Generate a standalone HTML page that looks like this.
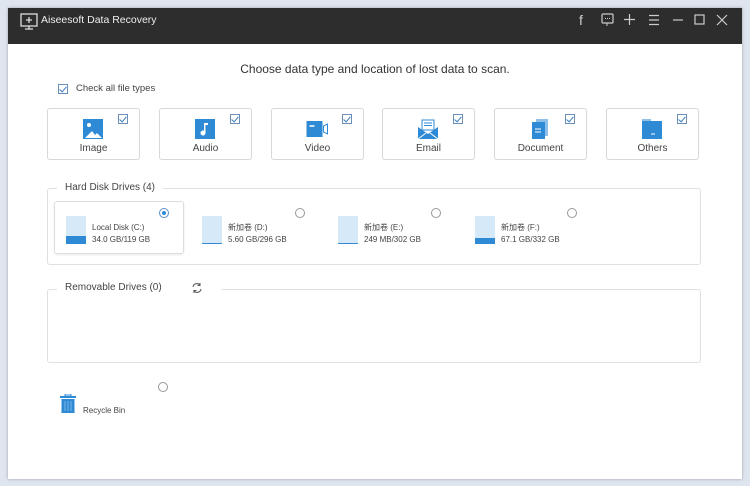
<!DOCTYPE html><html><head><style>
*{margin:0;padding:0;box-sizing:border-box}
body{width:750px;height:486px;background:#dfe5ee;font-family:"Liberation Sans","Noto Sans CJK SC",sans-serif;position:relative;overflow:hidden;color:#444}
.win{position:absolute;left:8px;top:8px;width:734px;height:471px;background:#fff;box-shadow:0 0 3px rgba(0,0,0,.3)}
.tb{position:absolute;left:0;top:0;width:734px;height:36px;background:#2d2d2d;color:#eee;font-size:10.5px}
.a{position:absolute}
.card{position:absolute;top:100px;width:93px;height:52px;border:1px solid #d8d8d8;border-radius:3px;font-size:10px;color:#444;text-align:center}
.card .l{position:absolute;left:0;right:0;top:34px}
.card .ic{position:absolute;left:35px;top:10px;width:20px;height:20px}
.cb{position:absolute;width:10px;height:10px;border:1px solid #6a8fb8;background:#fff}
.cb:after{content:"";position:absolute;left:2px;top:0px;width:3px;height:6px;border:solid #3a7cc0;border-width:0 1.3px 1.3px 0;transform:rotate(40deg)}
.grp{position:absolute;border:1px solid #e0e0e0;border-radius:3px}
.lg{position:absolute;background:#fff;padding:0 8px;font-size:10px;color:#444}
.rad{position:absolute;width:10px;height:10px;border:1px solid #999;border-radius:50%;background:#fff}
.drv{position:absolute;font-size:8px;color:#444;line-height:12px}
.disk{position:absolute;width:20px;height:28px;background:#d6e9f8}
</style></head><body>
<div class="win">
<div class="tb">
<svg class="a" style="left:12px;top:5px" width="18" height="17" viewBox="0 0 18 17"><rect x="1" y="1" width="16" height="12" fill="none" stroke="#ddd" stroke-width="1.3"/><path d="M9 4v6M6 7h6M5 16h8M9 13v3" stroke="#ddd" stroke-width="1.3"/></svg>
<div class="a" style="left:33px;top:6px">Aiseesoft Data Recovery</div>
<div class="a" style="left:571px;top:4px;font-size:14px;color:#ccc">f</div>
<svg class="a" style="left:593px;top:5px" width="13" height="14"><rect x="1" y="1" width="11" height="9" rx="1" fill="none" stroke="#ccc" stroke-width="1.2"/><path d="M4 5.5h1M6 5.5h1M8 5.5h1M6 10v3" stroke="#ccc"/></svg>
<svg class="a" style="left:615px;top:5px" width="13" height="13"><path d="M6.5 1v11M1 6.5h11" stroke="#ccc" stroke-width="1.2"/></svg>
<svg class="a" style="left:640px;top:6px" width="12" height="12"><path d="M1 1.5h10M1 6h10M1 10.5h10" stroke="#ccc" stroke-width="1.2"/></svg>
<svg class="a" style="left:664px;top:6px" width="12" height="12"><path d="M1 6h10" stroke="#ccc" stroke-width="1.2"/></svg>
<svg class="a" style="left:686px;top:6px" width="12" height="12"><rect x="1" y="1" width="9" height="9" fill="none" stroke="#ccc" stroke-width="1.2"/></svg>
<svg class="a" style="left:708px;top:6px" width="12" height="12"><path d="M1 1l10 10M11 1L1 11" stroke="#ccc" stroke-width="1.2"/></svg>
</div>
<div class="a" style="left:0;width:734px;top:54px;text-align:center;font-size:12px;color:#333">Choose data type and location of lost data to scan.</div>
<div class="cb" style="left:50px;top:76px"></div>
<div class="a" style="left:68px;top:75px;font-size:9.5px">Check all file types</div>

<div class="card" style="left:39px"><svg class="ic" viewBox="0 0 20 20"><rect width="20" height="20" fill="#2f8ad6"/><path d="M2 19l7-7 3 4 2-2 5 5z" fill="#fff"/><circle cx="6" cy="6" r="2" fill="#fff"/></svg><div class="cb" style="left:70px;top:5px"></div><div class="l">Image</div></div>
<div class="card" style="left:151px"><svg class="ic" viewBox="0 0 20 20"><rect width="20" height="20" fill="#2f8ad6"/><path d="M9 4h4v2h-2.5v8a2.5 2.5 0 1 1-1.5-2.3z" fill="#fff"/></svg><div class="cb" style="left:70px;top:5px"></div><div class="l">Audio</div></div>
<div class="card" style="left:263px"><svg class="ic" viewBox="0 0 20 20" style="width:23px;left:33px"><rect x="0" y="2" width="16" height="16" fill="#2f8ad6"/><path d="M3 7h5" stroke="#fff" stroke-width="1.5"/><path d="M17 7l4-2v10l-4-2z" fill="none" stroke="#2f8ad6"/></svg><div class="cb" style="left:70px;top:5px"></div><div class="l">Video</div></div>
<div class="card" style="left:374px"><svg class="ic" viewBox="0 0 20 20"><rect x="4" y="1" width="12" height="10" fill="#fff" stroke="#2f8ad6"/><path d="M6 4h8M6 6.5h8" stroke="#2f8ad6"/><path d="M0 8l10 7 10-7v12H0z" fill="#2f8ad6"/><path d="M0 20l8-6M20 20l-8-6" stroke="#fff"/></svg><div class="cb" style="left:70px;top:5px"></div><div class="l">Email</div></div>
<div class="card" style="left:486px"><svg class="ic" viewBox="0 0 20 20"><rect x="6" y="0" width="12" height="17" fill="#8cc0ea"/><rect x="2" y="3" width="13" height="17" fill="#2f8ad6"/><path d="M5 10h6M5 13h6" stroke="#fff"/></svg><div class="cb" style="left:70px;top:5px"></div><div class="l">Document</div></div>
<div class="card" style="left:598px"><svg class="ic" viewBox="0 0 20 20"><rect x="0" y="0" width="9" height="4" fill="#8cc0ea"/><rect x="0" y="2" width="20" height="18" fill="#2f8ad6"/><path d="M9 15h4" stroke="#fff"/></svg><div class="cb" style="left:70px;top:5px"></div><div class="l">Others</div></div>

<div class="grp" style="left:39px;top:180px;width:654px;height:77px"></div>
<div class="lg" style="left:49px;top:174px">Hard Disk Drives (4)</div>
<div class="a" style="left:46px;top:193px;width:130px;height:53px;border:1px solid #ddd;border-radius:3px;box-shadow:0 1px 2px rgba(0,0,0,.08)"></div>
<div class="rad" style="left:151px;top:200px;border-color:#5a8fc8"><div style="position:absolute;left:2px;top:2px;width:4px;height:4px;border-radius:50%;background:#2f8ad6"></div></div>
<div class="disk" style="left:58px;top:208px"></div><div class="a" style="left:58px;top:228px;width:20px;height:8px;background:#2f8ad6"></div>
<div class="drv" style="left:84px;top:214px">Local Disk (C:)<br>34.0 GB/119 GB</div>
<div class="rad" style="left:287px;top:200px"></div>
<div class="disk" style="left:194px;top:208px"></div><div class="a" style="left:194px;top:235px;width:20px;height:1px;background:#2f8ad6"></div>
<div class="drv" style="left:220px;top:214px">新加卷 (D:)<br>5.60 GB/296 GB</div>
<div class="rad" style="left:423px;top:200px"></div>
<div class="disk" style="left:330px;top:208px"></div><div class="a" style="left:330px;top:235px;width:20px;height:1px;background:#2f8ad6"></div>
<div class="drv" style="left:356px;top:214px">新加卷 (E:)<br>249 MB/302 GB</div>
<div class="rad" style="left:559px;top:200px"></div>
<div class="disk" style="left:467px;top:208px"></div><div class="a" style="left:467px;top:230px;width:20px;height:6px;background:#2f8ad6"></div>
<div class="drv" style="left:493px;top:214px">新加卷 (F:)<br>67.1 GB/332 GB</div>

<div class="grp" style="left:39px;top:281px;width:654px;height:74px"></div>
<div class="lg" style="left:49px;top:274px;padding-right:60px">Removable Drives (0)</div>
<svg class="a" style="left:183px;top:274px" width="12" height="12"><path d="M2 5a4 4 0 0 1 7-2M10 7a4 4 0 0 1-7 2" fill="none" stroke="#555"/><path d="M9 1v2.5H6.5M3 11V8.5h2.5" fill="none" stroke="#555"/></svg>

<div class="rad" style="left:150px;top:374px"></div>
<svg class="a" style="left:52px;top:386px" width="16" height="19" viewBox="0 0 16 19"><rect x="5" y="0" width="6" height="2" fill="none" stroke="#2f8ad6"/><rect x="0" y="2" width="16" height="2" fill="#2f8ad6"/><rect x="1.5" y="5" width="13" height="14" fill="#2f8ad6"/><path d="M5 7v10M8 7v10M11 7v10" stroke="#8cc0ea" stroke-width=".8"/></svg>
<div class="a" style="left:75px;top:398px;font-size:8px">Recycle Bin</div>
</div>
</body></html>
